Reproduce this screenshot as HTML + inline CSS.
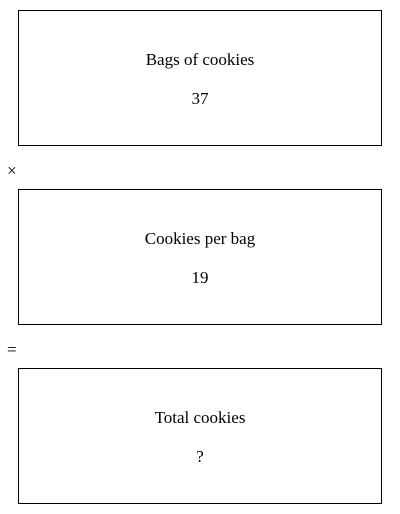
<!DOCTYPE html>
<html><head><style>
body{margin:0;width:400px;height:514px;background:#fff;font-family:"Liberation Serif",serif;color:#000;position:relative}
.box{position:absolute;left:18px;width:362px;height:134px;border:1px solid #000}
.t{position:absolute;left:0;right:0;text-align:center;font-size:17px;line-height:20px}
.op{position:absolute;left:7px;font-size:17px;line-height:20px}
</style></head><body>
<div class="box" style="top:10px"><div class="t" style="top:39px">Bags of cookies</div><div class="t" style="top:78px">37</div></div>
<div class="op" style="top:161px">×</div>
<div class="box" style="top:189px"><div class="t" style="top:39px">Cookies per bag</div><div class="t" style="top:78px">19</div></div>
<div class="op" style="top:340px">=</div>
<div class="box" style="top:368px"><div class="t" style="top:39px">Total cookies</div><div class="t" style="top:78px">?</div></div>
</body></html>
